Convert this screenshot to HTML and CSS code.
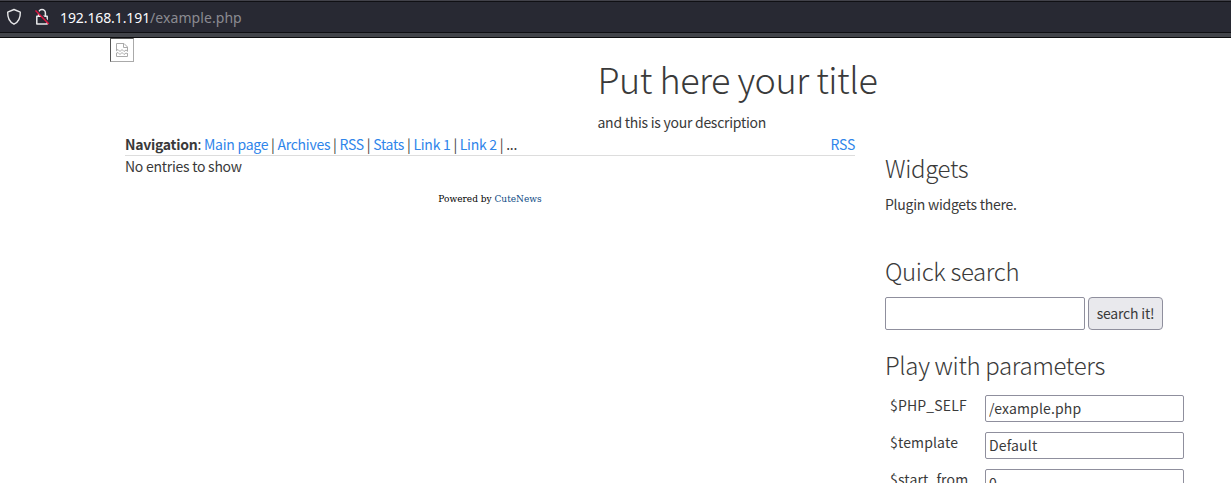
FILE: index.html
```html
<!DOCTYPE html>
<html lang="en">
<head>
<meta charset="utf-8">
<title>Example</title>
<link rel="stylesheet" href="styles.css">
</head>
<body>
<header class="urlbar">
  <svg class="shield" width="16" height="18" viewBox="0 0 16 18"><path d="M8 1.5 L14.3 4.2 C14.5 10 12.5 14 8 16.2 C3.5 14 1.5 10 1.7 4.2 Z" fill="none" stroke="#e8e8ea" stroke-width="1.4" stroke-linejoin="round"/></svg>
  <svg class="lock" width="16" height="18" viewBox="0 0 16 18"><path d="M4.6 8 V5 a3.4 3.4 0 0 1 6.8 0 V8 M2.8 8.2 H13.2 V16 H2.8 Z" fill="none" stroke="#e8e8ea" stroke-width="1.5" stroke-linejoin="round"/><path d="M2.5 2 L15.5 15" stroke="#2a2a35" stroke-width="1.6"/><path d="M1.5 2.5 L14.8 16" stroke="#e2123f" stroke-width="1.4"/></svg>
  <span class="url"><b class="host">192.168.1.191</b>/example.php</span>
</header>
<div class="page">
  <div class="banner">
    <div class="broken"><svg width="14" height="14" viewBox="0 0 14 14" fill="none" stroke="#aaa"><path d="M1.5 7.5 V.5 H9 L12.5 4 V8 M8.5 .5 V4.5 H12.5 M1 8 L3 6.5 L5 8.5 L7 6.5 L9 8.5 L11 7 L13 8.5 M1.5 10 V13.5 H12.5 V10.5 M1 10.5 L3 9.5 L5 11.5 L7 9.5 L9 11.5 L11 10 L13 11"/></svg></div>
    <div class="heading">
      <h1>Put here your title</h1>
      <p class="desc">and this is your description</p>
    </div>
  </div>
  <div class="columns">
    <main class="content">
      <nav class="nav">
        <span><b>Navigation</b>: <a>Main page</a> | <a>Archives</a> | <a>RSS</a> | <a>Stats</a> | <a>Link 1</a> | <a>Link 2</a> | ...</span>
        <a>RSS</a>
      </nav>
      <p class="empty">No entries to show</p>
      <p class="powered">Powered by <a>CuteNews</a></p>
    </main>
    <aside class="side">
      <h3>Widgets</h3>
      <p class="widget-text">Plugin widgets there.</p>
      <h3>Quick search</h3>
      <form class="search"><input class="search-field" type="text"><button class="search-btn" type="button">search it!</button></form>
      <h3>Play with parameters</h3>
      <div class="params">
        <label>$PHP_SELF</label><input type="text" value="/example.php">
        <label>$template</label><input type="text" value="Default">
        <label>$start_from</label><input type="text" value="0">
      </div>
    </aside>
  </div>
</div>
</body>
</html>
```
FILE: styles.css
```css
* { box-sizing: border-box; }
body { margin: 0; height: 483px; overflow: hidden; background: #fff; color: #3a3a3a; font: 14px/22px "Noto Sans CJK JP", sans-serif; letter-spacing: -.26px; }
h1, h3, p { margin: 0; }
.urlbar { height: 38px; display: flex; align-items: center; padding: 0 0 4px 6px; background: #282933; border-top: 1px solid #42424a; border-bottom: 1px solid #0c0c0e; box-shadow: inset 0 1px #101014, inset 0 -4px #42444a, inset 0 -5px #101014; }
.shield { flex: none; }
.lock { flex: none; margin-left: 12px; }
.url { margin-left: 10px; padding-top: 2px; font: 14px/20px "Noto Sans", sans-serif; letter-spacing: .07px; color: #8b8b91; }
.host { font-weight: 400; color: #fbfbfe; letter-spacing: -.1px; }
.banner { display: flex; height: 96px; padding-left: 110px; }
.broken { width: 24px; height: 24px; border: 1px solid #aaa; border-top-color: #555; border-left-color: #555; display: flex; align-items: center; justify-content: center; }
.heading { margin-left: 463.5px; padding-top: 17px; }
h1 { font-size: 36px; line-height: 46px; font-weight: 300; white-space: nowrap; letter-spacing: -.48px; }
.desc { margin-top: 10px; }
.columns { display: flex; padding-left: 125px; }
.content { width: 730px; }
.nav { display: flex; justify-content: space-between; height: 22px; line-height: 20px; border-bottom: 1px solid #ddd; }
a { color: #2f85ea; }
.empty { line-height: 20px; }
.powered { margin-top: 15px; text-align: center; font: 9px/16px "DejaVu Serif", serif; letter-spacing: 0; color: #000; }
.powered a { color: #0d4a85; }
.side { margin-left: 30px; padding-top: 18px; width: 316px; }
h3 { font-size: 24px; line-height: 32px; font-weight: 300; letter-spacing: -.35px; }
.widget-text { margin: 9px 0 40px; }
input { border: 1px solid #8f8f9d; border-radius: 2px; background: #fff; color: #3a3a3a; font: inherit; outline: 0; }
.search { display: flex; gap: 3px; margin: 10px 0 19px; }
.search-field { width: 200px; height: 33px; }
.search-btn { width: 75px; height: 33px; padding: 0 0 2px; border: 1px solid #8f8f9d; border-radius: 4px; background: #e9e9ed; color: #3a3a3a; font: inherit; letter-spacing: -.2px; }
.params { display: grid; grid-template-columns: 95px 199px; row-gap: 10px; margin-top: 14px; padding-left: 5px; letter-spacing: .15px; line-height: 20px; }
.params input { height: 27px; padding: 0 3px 2px; letter-spacing: .15px; }
```
